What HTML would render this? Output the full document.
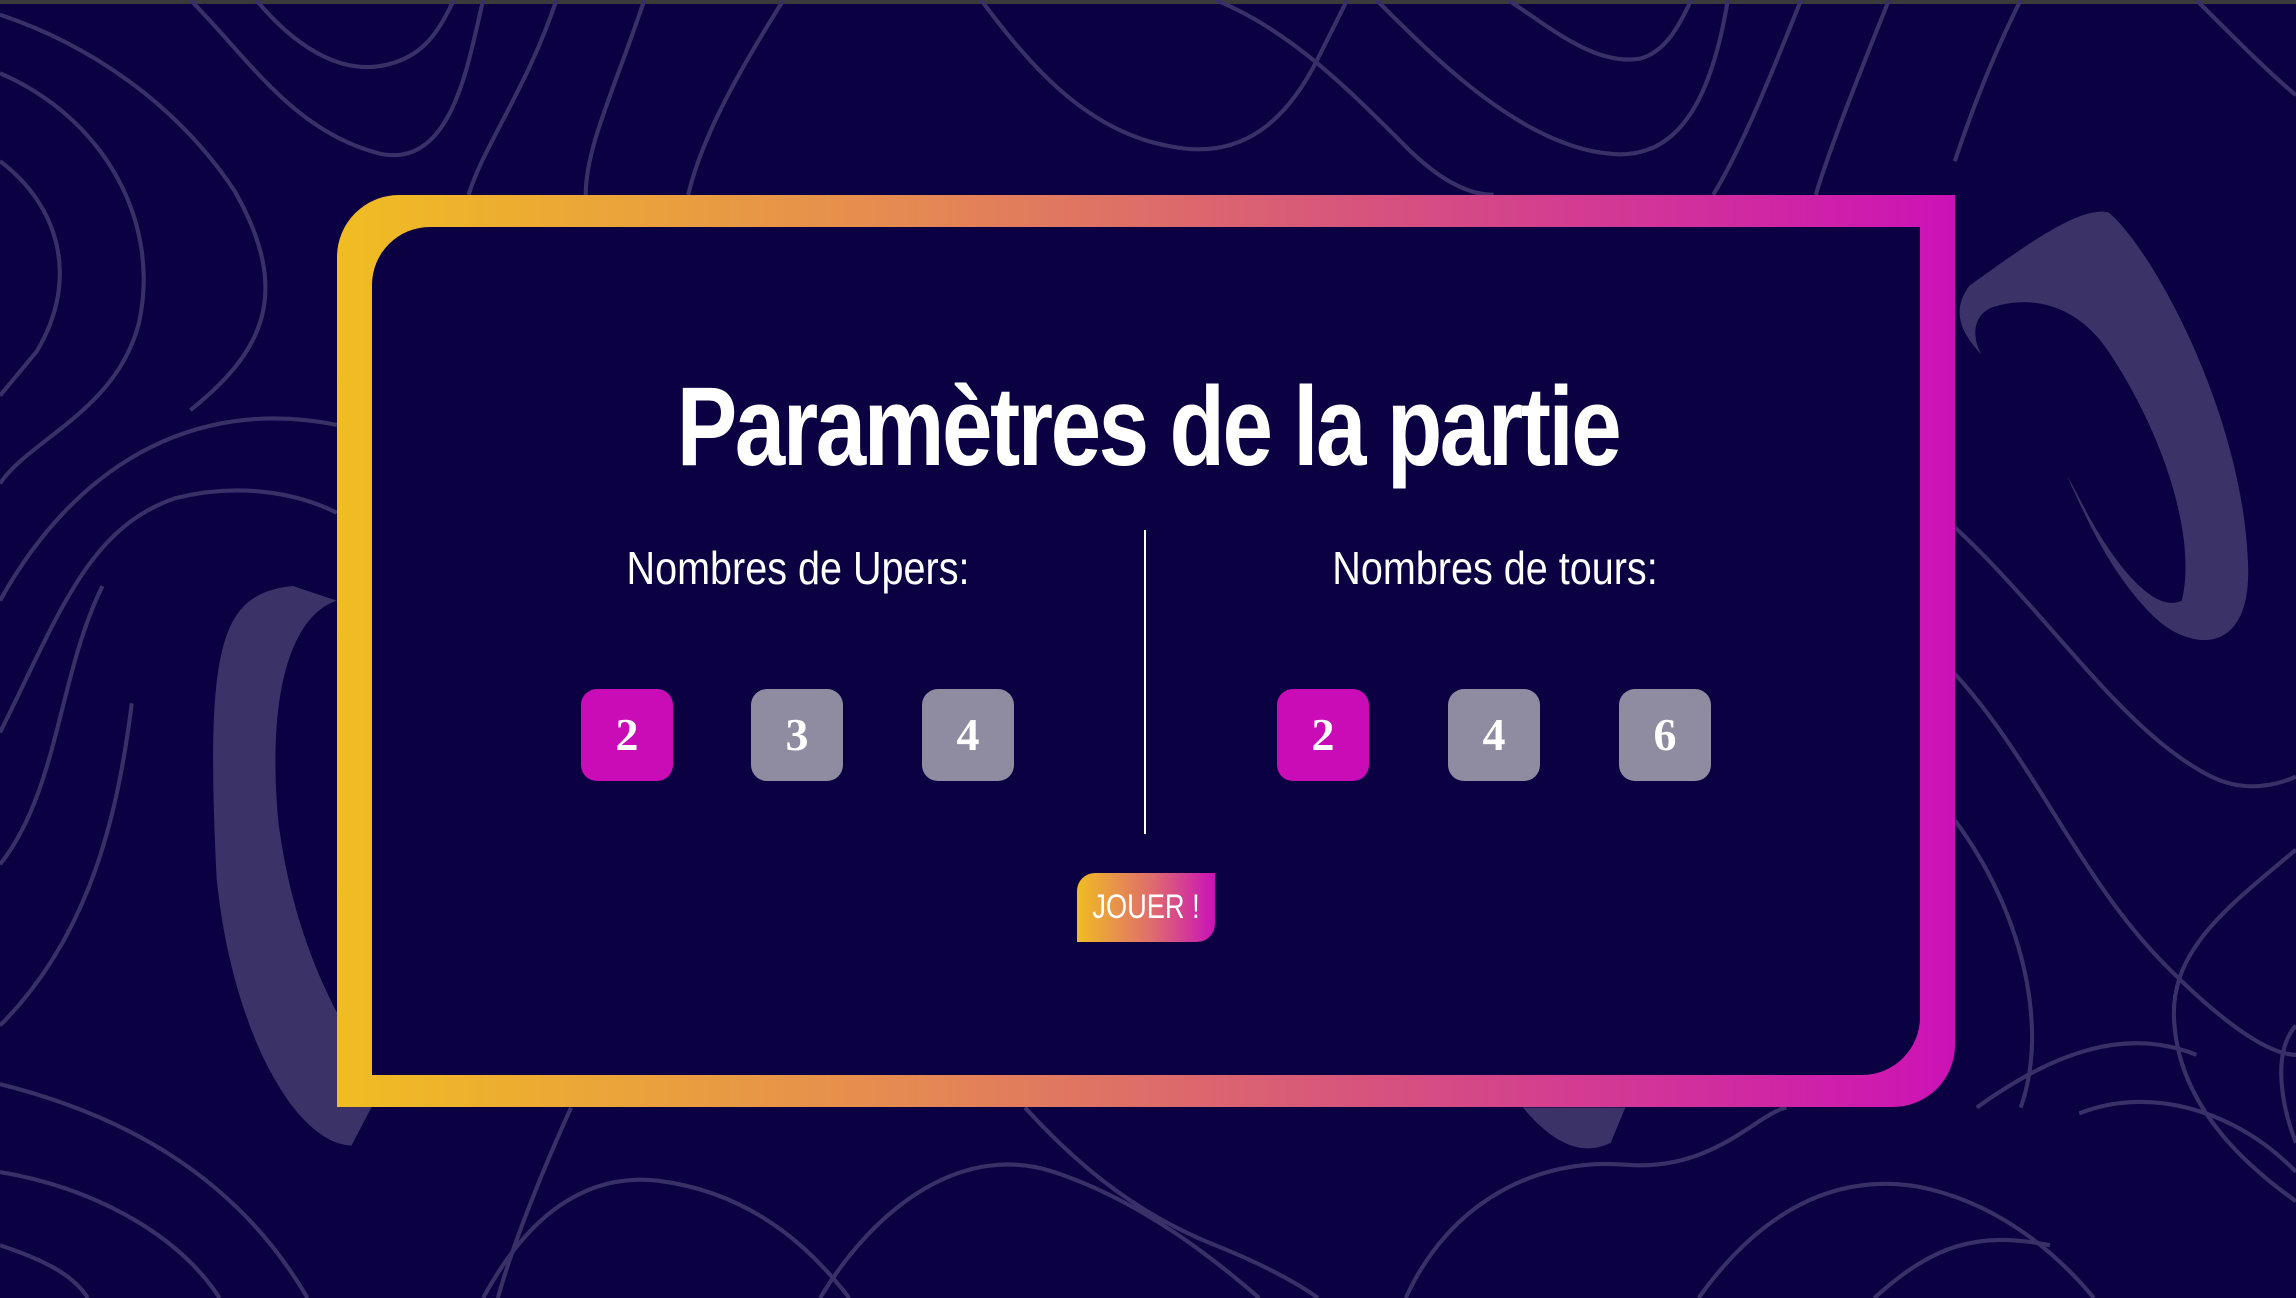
<!DOCTYPE html>
<html><head><meta charset="utf-8"><style>
html,body{margin:0;padding:0;}
body{width:2296px;height:1298px;background:#0a0042;position:relative;overflow:hidden;font-family:"Liberation Sans",sans-serif;}
.topbar{position:absolute;left:0;top:0;width:2296px;height:4px;background:#3a3a3a;}
svg.bg{position:absolute;left:0;top:0;}
.card{position:absolute;left:337px;top:195px;width:1618px;height:912px;border-radius:62px 0 62px 0;background:linear-gradient(90deg,#f0bd22 0%,#e58a52 35%,#d85a78 60%,#cc12b6 100%);}
.inner{position:absolute;left:35px;top:32px;right:35px;bottom:32px;background:#0a0042;border-radius:58px 0 58px 0;}
h1{position:absolute;left:0;width:2296px;top:362px;margin:0;text-align:center;color:#fff;font-weight:bold;font-size:112px;letter-spacing:-3px;line-height:130px;transform:scaleX(0.81);transform-origin:1148px 0;}
.lbl{position:absolute;top:540px;width:600px;text-align:center;color:#fff;font-size:46px;line-height:56px;transform:scaleX(0.86);}
.div{position:absolute;left:1144px;top:530px;width:2px;height:304px;background:#fff;}
.b{position:absolute;top:689px;width:92px;height:92px;border-radius:16px;background:#8f8ba1;color:#fff;font-family:"Liberation Serif",serif;font-weight:bold;font-size:46px;line-height:92px;text-align:center;}
.b.on{background:#c90cb6;}
.play{position:absolute;left:1077px;top:873px;width:138px;height:69px;border-radius:18px 0 18px 0;background:linear-gradient(90deg,#f0bd22,#df6b6e 55%,#c912b8);}
.play span{position:absolute;left:0;width:138px;top:0;color:#fff;font-size:34px;line-height:69px;text-align:center;transform:scaleX(0.8);}
</style></head><body>
<div class="topbar"></div>
<svg class="bg" width="2296" height="1298" viewBox="0 0 1568 886" preserveAspectRatio="none">
<g fill="#3b3268">
<path d="M1345,195 C1380,170 1420,140 1440,145 C1470,170 1530,280 1535,380 C1540,450 1495,445 1470,420 C1420,370 1410,300 1375,260 C1340,235 1330,215 1345,195Z"/>
<path d="M200,400 C150,405 140,440 148,600 C158,700 200,780 240,782 L262,740 C230,700 200,640 190,560 C182,470 200,420 230,410Z"/>
<path d="M1040,756 C1060,780 1080,790 1100,780 L1110,756Z"/>
</g>
<g fill="#0a0042">
<path d="M1360,210 C1390,200 1420,210 1440,240 C1480,300 1500,370 1490,410 C1470,420 1440,380 1420,340 C1400,300 1370,270 1355,245 C1345,230 1348,215 1360,210Z"/>
</g>
<g fill="none" stroke="#3a3068" stroke-width="2.8">
<path d="M0,10 C60,30 120,70 160,130 C200,200 180,240 130,280"/>
<path d="M0,50 C70,80 110,150 95,220 C80,280 20,300 0,330"/>
<path d="M0,110 C40,140 55,190 25,240 L0,270"/>
<path d="M130,0 C170,40 200,90 260,105 C310,115 320,40 330,0"/>
<path d="M175,0 C200,30 230,50 260,45 C290,40 300,20 310,0"/>
<path d="M380,0 C360,60 330,100 320,133"/>
<path d="M440,0 C420,60 400,100 400,133"/>
<path d="M535,0 C510,40 480,90 470,133"/>
<path d="M0,410 C50,320 130,270 230,290"/>
<path d="M0,500 C40,420 60,360 120,340 C160,330 200,335 230,350"/>
<path d="M0,590 C40,540 40,460 70,400"/>
<path d="M0,700 C60,640 80,560 90,480"/>
<path d="M670,0 C700,40 740,90 800,100 C850,110 880,80 900,40 L920,0"/>
<path d="M830,0 C880,20 920,60 960,100 C990,130 1010,133 1020,133"/>
<path d="M940,0 C980,40 1040,100 1100,105 C1150,110 1170,60 1180,0"/>
<path d="M1030,0 C1060,20 1090,45 1120,40 C1140,35 1150,10 1155,0"/>
<path d="M1230,0 C1210,50 1190,100 1170,133"/>
<path d="M1290,0 C1270,50 1250,100 1240,133"/>
<path d="M1380,0 C1360,40 1345,80 1335,110"/>
<path d="M1500,0 C1530,30 1550,50 1568,65"/>
<path d="M1335,360 C1400,420 1450,500 1510,530 C1540,545 1568,530 1568,530"/>
<path d="M1335,460 C1390,520 1420,600 1480,660 C1520,700 1550,720 1568,720"/>
<path d="M1335,560 C1380,620 1400,700 1380,756"/>
<path d="M1568,580 C1520,620 1480,650 1485,700 C1490,760 1540,800 1568,820"/>
<path d="M1568,700 C1550,720 1560,760 1568,780"/>
<path d="M0,740 C80,760 160,800 210,886"/>
<path d="M0,800 C60,810 120,840 150,886"/>
<path d="M0,850 C30,860 50,870 60,886"/>
<path d="M330,886 C360,830 400,800 450,806 C520,815 560,860 580,886"/>
<path d="M390,756 C370,800 350,850 340,886"/>
<path d="M560,886 C600,820 660,780 720,800 C780,820 830,860 860,886"/>
<path d="M700,756 C740,800 780,830 830,850 C880,870 900,886 900,886"/>
<path d="M960,886 C990,820 1050,790 1110,795 C1170,800 1200,760 1220,756"/>
<path d="M1160,886 C1200,830 1250,800 1310,810 C1360,820 1400,850 1430,886"/>
<path d="M1280,886 C1320,850 1350,840 1400,850"/>
<path d="M1420,760 C1470,740 1530,760 1568,800"/>
<path d="M1350,756 C1400,720 1450,700 1500,720"/>
</g>
</svg>
<div class="card"><div class="inner"></div></div>
<h1>Paramètres de la partie</h1>
<div class="lbl" style="left:498px">Nombres de Upers:</div>
<div class="lbl" style="left:1195px">Nombres de tours:</div>
<div class="div"></div>
<div class="b on" style="left:581px">2</div>
<div class="b" style="left:751px">3</div>
<div class="b" style="left:922px">4</div>
<div class="b on" style="left:1277px">2</div>
<div class="b" style="left:1448px">4</div>
<div class="b" style="left:1619px">6</div>
<div class="play"><span>JOUER !</span></div>
</body></html>
